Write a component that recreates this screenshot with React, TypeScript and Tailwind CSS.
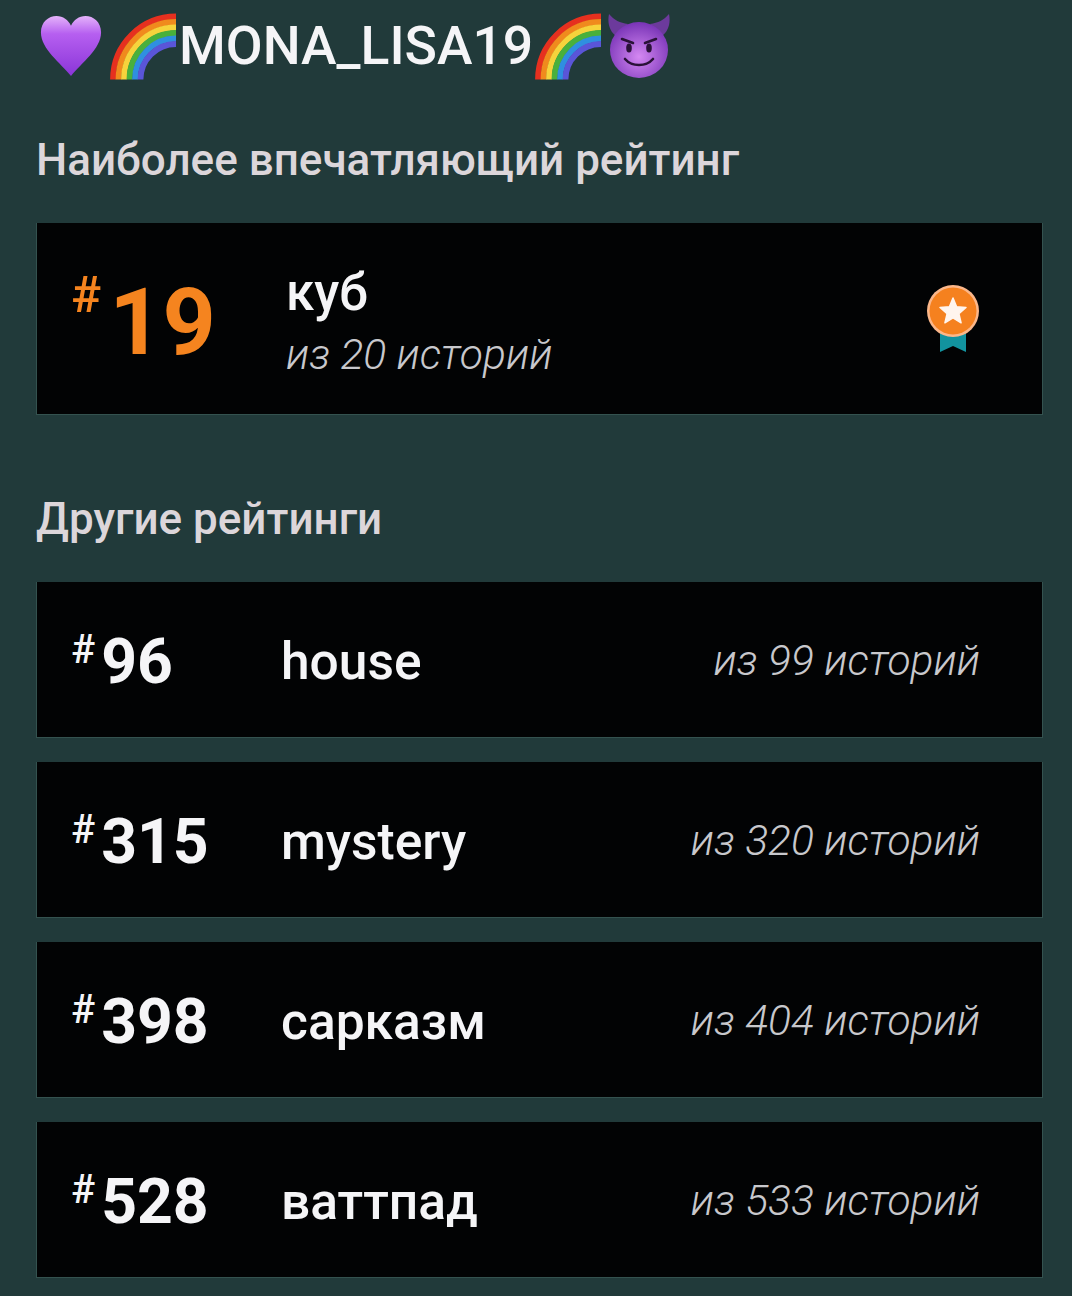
const others = [
  { rank: "96", tag: "house", total: "из 99 историй" },
  { rank: "315", tag: "mystery", total: "из 320 историй" },
  { rank: "398", tag: "сарказм", total: "из 404 историй" },
  { rank: "528", tag: "ваттпад", total: "из 533 историй" },
];

function Heart() {
  return (
    <svg width="64" height="64" viewBox="0 0 66 66" className="shrink-0">
      <defs>
        <linearGradient id="heart" x1="0" y1="0" x2="0" y2="1">
          <stop offset="0" stopColor="#e4b3fa" />
          <stop offset="0.3" stopColor="#b65ff0" />
          <stop offset="1" stopColor="#8a35d8" />
        </linearGradient>
      </defs>
      <path d="M33 64C22 50 2 36 2 19C2 8 10 2 18 2C25 2 30 6 33 12C36 6 41 2 48 2C56 2 64 8 64 19C64 36 44 50 33 64Z" fill="url(#heart)" />
    </svg>
  );
}

function Rainbow() {
  const bands = [
    ["#e6301f", 63],
    ["#f08a1d", 57.5],
    ["#f6d33c", 52],
    ["#49b03c", 46.5],
    ["#2f8fe0", 41],
    ["#5a55d8", 35.5],
  ] as const;
  return (
    <svg width="66" height="67" viewBox="0 0 66 66" className="shrink-0">
      {bands.map(([color, r]) => (
        <path key={color} d={`M${66 - r} 66A${r} ${r} 0 0 1 66 ${66 - r}`} fill="none" stroke={color} strokeWidth="5.8" />
      ))}
    </svg>
  );
}

function Devil() {
  return (
    <svg width="62" height="64" viewBox="0 0 62 64" className="shrink-0">
      <defs>
        <radialGradient id="devil" cx="0.5" cy="0.62" r="0.6">
          <stop offset="0" stopColor="#d488f2" />
          <stop offset="1" stopColor="#7b36b8" />
        </radialGradient>
      </defs>
      <path d="M1 0C-1 10 2 18 9 23L20 10C12 9 6 6 1 0ZM61 0C63 10 60 18 53 23L42 10C50 9 56 6 61 0Z" fill="#6c3a9c" />
      <ellipse cx="31" cy="36" rx="29" ry="28" fill="url(#devil)" />
      <path d="M14 25L25 29M48 25L37 29" stroke="#2a1238" strokeWidth="2.6" strokeLinecap="round" />
      <ellipse cx="21" cy="34" rx="2.8" ry="4.6" fill="#2a1238" />
      <ellipse cx="41" cy="34" rx="2.8" ry="4.6" fill="#2a1238" />
      <path d="M17 45C24 53 38 53 45 45" fill="none" stroke="#2a1238" strokeWidth="2.6" strokeLinecap="round" />
    </svg>
  );
}

function Medal() {
  return (
    <svg width="54" height="68" viewBox="0 0 54 68">
      <path d="M14 46H40V67L27 61L14 67Z" fill="#12939f" />
      <circle cx="27" cy="26" r="26" fill="#fbb78a" />
      <circle cx="27" cy="26" r="23.5" fill="#f5811f" />
      <path d="M27 13L30.6 21.8L40 22.5L32.9 28.6L35.1 37.8L27 32.9L18.9 37.8L21.1 28.6L14 22.5L23.4 21.8Z" fill="#fff5ee" stroke="#fff5ee" strokeWidth="1.5" strokeLinejoin="round" />
    </svg>
  );
}

export default function App() {
  return (
    <div className="h-[1296px] overflow-hidden bg-[#213a3a] pt-[12px] pr-[29px] pl-[36px] font-['Roboto',sans-serif]">
      <div className="ml-[3px] flex h-[68px] items-center">
        <Heart />
        <div className="mr-[3px] ml-[7px]"><Rainbow /></div>
        <span className="mr-[2px] text-[53.5px] leading-none font-medium text-[#f5f5f7]">MONA_LISA19</span>
        <Rainbow />
        <div className="ml-[7px]"><Devil /></div>
      </div>

      <h2 className="mt-[55px] text-[44px] leading-[50px] font-medium text-[#dcd6da]">Наиболее впечатляющий рейтинг</h2>

      <div className="mt-[38px] flex h-[192px] items-center border-x border-b border-[#34524f] bg-[#020304] pr-[62px] pl-[34px]">
        <div className="flex w-[215px] items-start text-[#f5841f]">
          <span className="mt-[1px] text-[50px] leading-[50px] font-medium">#</span>
          <span className="ml-[8px] pt-[9px] text-[93px] leading-[90px] font-bold">19</span>
        </div>
        <div className="flex-1 pt-[7px]">
          <div className="text-[51px] leading-[56px] font-medium text-[#f5f5f7]">куб</div>
          <div className="mt-[8px] text-[42.6px] leading-[50px] font-light text-[#c8c8cc] italic">из 20 историй</div>
        </div>
        <Medal />
      </div>

      <h2 className="mt-[79px] text-[44px] leading-[50px] font-medium text-[#dcd6da]">Другие рейтинги</h2>

      <div className="mt-[38px] flex flex-col gap-[24px]">
        {others.map((row) => (
          <div key={row.rank} className="flex h-[156px] items-center border-x border-b border-[#34524f] bg-[#020304] pr-[62px] pl-[34px]">
            <div className="flex w-[210px] items-start text-[#f5f5f7]">
              <span className="mt-[8px] text-[40px] leading-[40px] font-medium">#</span>
              <span className="ml-[6px] pt-[5px] text-[62.5px] leading-[70px] font-bold">{row.rank}</span>
            </div>
            <div className="flex-1 pt-[5px] text-[51.5px] leading-[60px] font-medium text-[#f5f5f7]">{row.tag}</div>
            <div className="text-[42.6px] leading-[50px] font-light text-[#c8c8cc] italic">{row.total}</div>
          </div>
        ))}
      </div>
    </div>
  );
}
